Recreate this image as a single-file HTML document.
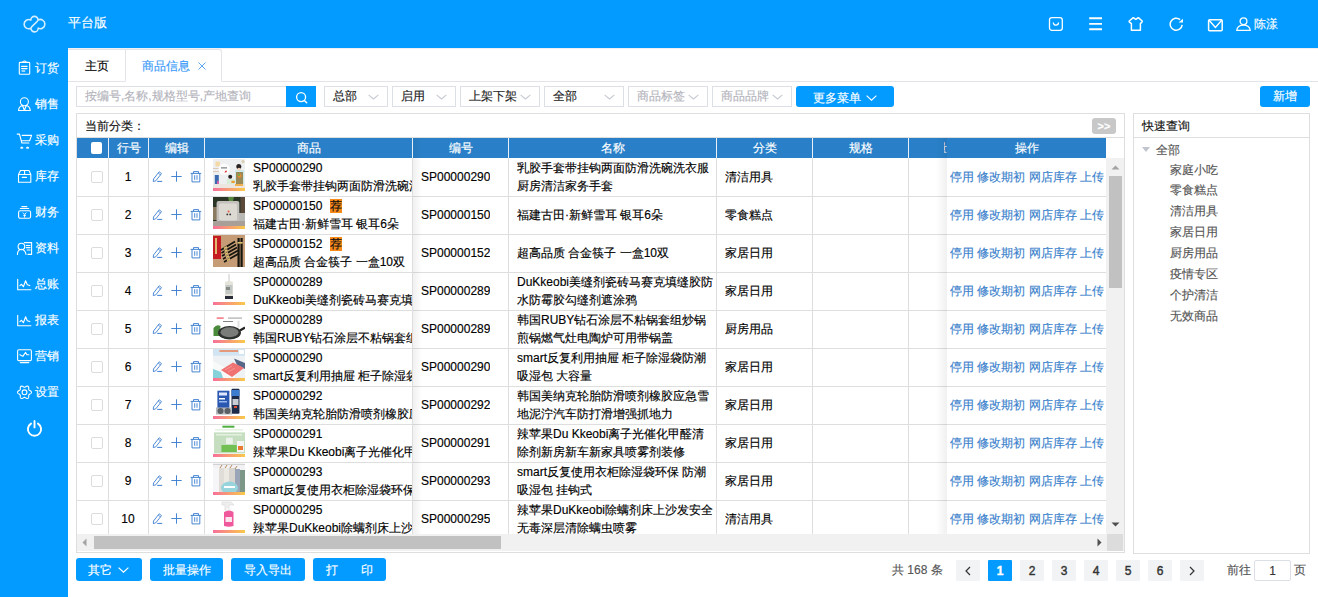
<!DOCTYPE html><html><head><meta charset="utf-8"><style>
*{margin:0;padding:0;box-sizing:border-box}
html,body{width:1318px;height:597px;overflow:hidden;background:#fff;font-family:"Liberation Sans",sans-serif;font-size:12px;color:#000;-webkit-text-stroke:0.15px currentColor}
.abs{position:absolute}
#top{position:absolute;left:0;top:0;width:1318px;height:48px;background:#039bff}
#side{position:absolute;left:0;top:0;width:68px;height:597px;background:#039bff}
.si{position:absolute;left:18px;width:50px;height:16px;color:#fff;font-size:12px;line-height:16px}
.si svg{position:absolute;left:0;top:1px}
.si span{position:absolute;left:17px;top:0;white-space:nowrap}
.tab{position:absolute;top:49px;height:33px;border:1px solid #e2e4ea;line-height:32px;font-size:12px}
.sel{position:absolute;top:86px;height:21px;border:1px solid #dcdfe6;line-height:19px;padding-left:8px;font-size:12px;color:#222;background:#fff}
.sel.ph{color:#b4b4bc}
.chev{position:absolute;right:8px;top:7px}
.btn{position:absolute;background:#039bff;color:#fff;border-radius:3px;text-align:center;font-size:12px}
.hd{position:absolute;top:138px;height:20px;background:#2980c8;color:#fff;line-height:20px;text-align:center}
.vl{position:absolute;width:1px;background:#dedede}
.hl{position:absolute;height:1px;background:#dedede}
.cell{position:absolute;white-space:nowrap;overflow:hidden}
.thumb{position:absolute;width:32px;height:32px}
.link{color:#3a7fcc}
.pg{position:absolute;top:560px;width:24px;height:21px;background:#f2f3f5;color:#333;text-align:center;line-height:23px;font-size:12px;-webkit-text-stroke:0.4px currentColor;border-radius:1px}
.tree{position:absolute;left:1170px;color:#555;font-size:12px;line-height:16px}
</style></head><body>
<svg width="0" height="0" style="position:absolute"><defs><filter id="bl" x="-5%" y="-5%" width="110%" height="110%"><feGaussianBlur stdDeviation="0.6"/></filter></defs></svg>
<div id="top"></div><div id="side"></div>
<svg class="abs" style="left:18px;top:10px" width="34" height="28" viewBox="0 0 34 28"><path d="M12.9 18.2A4.6 4.6 0 1 1 12.83 10.08A3.6 3.6 0 1 1 20.1 9.9C19.4 12.8 13.6 15.4 12.9 18.2M20.1 10A4.6 4.6 0 1 1 20.17 18.12A3.6 3.6 0 1 1 12.9 18.3" stroke="#d6eeff" stroke-width="1.6" fill="none" stroke-linecap="round" stroke-linejoin="round"/></svg>
<div class="abs" style="left:68px;top:14px;color:#fff;font-size:13px;line-height:18px">平台版</div>
<svg class="abs" style="left:14px;top:56px" width="20" height="22"><rect x="5.3" y="6.4" width="10.4" height="11.9" rx="0.8" stroke="#fff" fill="none" stroke-width="1.1" stroke-linecap="round" stroke-linejoin="round"/><path d="M8.2 6.3q2.1-2.6 4.3 0" stroke="#fff" fill="none" stroke-width="1.1" stroke-linecap="round" stroke-linejoin="round"/><path d="M7.6 10.4h5.5M7.6 12.6h5.5" stroke="#fff" fill="none" stroke-width="1.1" stroke-linecap="round" stroke-linejoin="round"/><path d="M7.6 15h3.6" stroke="#fff" stroke-width="1.6" opacity="0.75"/></svg>
<div class="si" style="top:59.5px"><span>订货</span></div>
<svg class="abs" style="left:14px;top:92px" width="20" height="22"><circle cx="10.4" cy="9.7" r="4" stroke="#fff" fill="none" stroke-width="1.1" stroke-linecap="round" stroke-linejoin="round"/><path d="M4.5 18.5q0.3-3.8 4-5.2L10.4 18.5L12.3 13.3q3.7 1.4 4 5.2z" stroke="#fff" fill="none" stroke-width="1.1" stroke-linecap="round" stroke-linejoin="round"/></svg>
<div class="si" style="top:95.5px"><span>销售</span></div>
<svg class="abs" style="left:14px;top:128px" width="20" height="22"><path d="M3.2 6.1h2.3l2.4 8.9h7" stroke="#fff" fill="none" stroke-width="1.1" stroke-linecap="round" stroke-linejoin="round"/><path d="M8.2 7.4h9.4l-2 5.3H7.6" stroke="#fff" fill="none" stroke-width="1.1" stroke-linecap="round" stroke-linejoin="round"/><path d="M6.6 20.2a1.2 1.2 0 0 1 2.4 0zM12.4 20.2a1.2 1.2 0 0 1 2.4 0z" fill="#fff" stroke="#fff" stroke-width="0.8"/></svg>
<div class="si" style="top:131.5px"><span>采购</span></div>
<svg class="abs" style="left:14px;top:164px" width="20" height="22"><path d="M4.5 10.5L6.5 6.5H15L16.8 10.5V18.3H4.5Z M4.5 10.5H16.8 M10.6 6.5V10.5 M8.3 13.4H12.5" stroke="#fff" fill="none" stroke-width="1.1" stroke-linecap="round" stroke-linejoin="round"/></svg>
<div class="si" style="top:167.5px"><span>库存</span></div>
<svg class="abs" style="left:14px;top:200px" width="20" height="22"><path d="M7.8 6.6H12.9M6.3 8.5H14.7" stroke="#fff" fill="none" stroke-width="1.1" stroke-linecap="round" stroke-linejoin="round"/><rect x="4.6" y="10.8" width="12" height="7.5" rx="1.6" stroke="#fff" fill="none" stroke-width="1.1" stroke-linecap="round" stroke-linejoin="round"/><path d="M8.8 12.6L10.6 14.4L12.4 12.6M10.6 14.4V17.6M9.2 15.3H12" stroke="#fff" fill="none" stroke-width="0.9"/></svg>
<div class="si" style="top:203.5px"><span>财务</span></div>
<svg class="abs" style="left:14px;top:236px" width="20" height="22"><circle cx="7.4" cy="10.5" r="3.3" stroke="#fff" fill="none" stroke-width="1.1" stroke-linecap="round" stroke-linejoin="round"/><path d="M3.4 18.4q0.2-4.6 4-5.1q3.8 0.5 4.6 5.1" stroke="#fff" fill="none" stroke-width="1.1" stroke-linecap="round" stroke-linejoin="round"/><path d="M10.4 6.6H17.6V18.4H14M12.2 9.5H16M12.2 11.6H16M13.2 14H16" stroke="#fff" fill="none" stroke-width="1.1" stroke-linecap="round" stroke-linejoin="round"/></svg>
<div class="si" style="top:239.5px"><span>资料</span></div>
<svg class="abs" style="left:14px;top:272px" width="20" height="22"><path d="M3.7 7.2V17.7H16.9" stroke="#fff" fill="none" stroke-width="1.1" stroke-linecap="round" stroke-linejoin="round"/><path d="M5.9 13.6L7.5 12.3L9.4 14.7L11.6 8.8L13.3 12.8L15.8 13.6" stroke="#fff" fill="none" stroke-width="1.1" stroke-linecap="round" stroke-linejoin="round"/></svg>
<div class="si" style="top:275.5px"><span>总账</span></div>
<svg class="abs" style="left:14px;top:308px" width="20" height="22"><path d="M3.7 7.2V17.7H16.9" stroke="#fff" fill="none" stroke-width="1.1" stroke-linecap="round" stroke-linejoin="round"/><path d="M5.9 13.6L7.5 12.3L9.4 14.7L11.6 8.8L13.3 12.8L15.8 13.6" stroke="#fff" fill="none" stroke-width="1.1" stroke-linecap="round" stroke-linejoin="round"/></svg>
<div class="si" style="top:311.5px"><span>报表</span></div>
<svg class="abs" style="left:14px;top:344px" width="20" height="22"><rect x="3.6" y="5.8" width="13.8" height="10.8" rx="1.2" stroke="#fff" fill="none" stroke-width="1.1" stroke-linecap="round" stroke-linejoin="round"/><path d="M6.3 18.6H14.7" stroke="#fff" stroke-width="1.3" stroke-linecap="round"/><path d="M5.9 10.7L8.8 12.4L11.6 8.4L12.9 10.7H14.9" stroke="#fff" fill="none" stroke-width="1.1" stroke-linecap="round" stroke-linejoin="round"/></svg>
<div class="si" style="top:347.5px"><span>营销</span></div>
<svg class="abs" style="left:14px;top:380px" width="20" height="22"><path d="M17.45 12.30 L17.39 12.66 L17.23 13.01 L16.98 13.33 L16.66 13.61 L16.30 13.85 L15.93 14.06 L15.58 14.25 L15.28 14.43 L15.04 14.61 L14.87 14.82 L14.77 15.08 L14.73 15.37 L14.73 15.72 L14.74 16.12 L14.74 16.54 L14.71 16.98 L14.63 17.40 L14.48 17.78 L14.26 18.09 L13.98 18.32 L13.63 18.45 L13.25 18.48 L12.85 18.42 L12.44 18.29 L12.05 18.10 L11.69 17.88 L11.35 17.67 L11.05 17.50 L10.77 17.39 L10.50 17.35 L10.23 17.39 L9.95 17.50 L9.65 17.67 L9.31 17.88 L8.95 18.10 L8.56 18.29 L8.15 18.42 L7.75 18.48 L7.37 18.45 L7.03 18.32 L6.74 18.09 L6.52 17.78 L6.37 17.40 L6.29 16.98 L6.26 16.54 L6.26 16.12 L6.27 15.72 L6.27 15.37 L6.23 15.08 L6.13 14.82 L5.96 14.61 L5.72 14.43 L5.42 14.25 L5.07 14.06 L4.70 13.85 L4.34 13.61 L4.02 13.33 L3.77 13.01 L3.61 12.66 L3.55 12.30 L3.61 11.94 L3.77 11.59 L4.02 11.27 L4.34 10.99 L4.70 10.75 L5.07 10.54 L5.42 10.35 L5.72 10.17 L5.96 9.99 L6.13 9.78 L6.23 9.52 L6.27 9.23 L6.27 8.88 L6.26 8.48 L6.26 8.06 L6.29 7.62 L6.37 7.20 L6.52 6.82 L6.74 6.51 L7.02 6.28 L7.37 6.15 L7.75 6.12 L8.15 6.18 L8.56 6.31 L8.95 6.50 L9.31 6.72 L9.65 6.93 L9.95 7.10 L10.23 7.21 L10.50 7.25 L10.77 7.21 L11.05 7.10 L11.35 6.93 L11.69 6.72 L12.05 6.50 L12.44 6.31 L12.85 6.18 L13.25 6.12 L13.63 6.15 L13.98 6.28 L14.26 6.51 L14.48 6.82 L14.63 7.20 L14.71 7.62 L14.74 8.06 L14.74 8.48 L14.73 8.88 L14.73 9.23 L14.77 9.52 L14.87 9.78 L15.04 9.99 L15.28 10.17 L15.58 10.35 L15.93 10.54 L16.30 10.75 L16.66 10.99 L16.98 11.27 L17.23 11.59 L17.39 11.94 L17.45 12.30Z" stroke="#fff" fill="none" stroke-width="1.1" stroke-linecap="round" stroke-linejoin="round"/><circle cx="10.5" cy="12.3" r="2.4" stroke="#fff" fill="none" stroke-width="1.1" stroke-linecap="round" stroke-linejoin="round"/></svg>
<div class="si" style="top:383.5px"><span>设置</span></div>
<svg class="abs" style="left:26px;top:420px" width="17" height="17" viewBox="0 0 17 17"><path d="M5 3.6A6.6 6.6 0 1 0 12 3.6" stroke="#fff" stroke-width="1.9" fill="none" stroke-linecap="round"/><path d="M8.5 1v6.4" stroke="#fff" stroke-width="1.9" stroke-linecap="round"/></svg>
<svg class="abs" style="left:1048px;top:17px" width="16" height="14" viewBox="0 0 16 14"><rect x="1.5" y="0.7" width="12.8" height="12.6" rx="2.4" stroke="#fff" fill="none" stroke-width="1.3" stroke-width="1.4"/><path d="M5.3 5.6a2.6 2.6 0 0 0 5.2 0" stroke="#fff" fill="none" stroke-width="1.3" stroke-width="1.2"/></svg>
<svg class="abs" style="left:1089px;top:17px" width="14" height="14" viewBox="0 0 14 14"><path d="M0.2 1.2h12.8M0.2 6.9h12.8M0.2 12.2h12.8" stroke="#fff" stroke-width="1.9"/></svg>
<svg class="abs" style="left:1127px;top:17px" width="17" height="15" viewBox="0 0 17 15"><path d="M6.3 0.6L8.8 2.3L11.3 0.6L15.2 4L15.2 4.8L13.4 6.6V13.3H4.4V6.6L2.2 4.8L2.2 4Z" stroke="#fff" fill="none" stroke-width="1.5" stroke-linejoin="round"/></svg>
<svg class="abs" style="left:1168px;top:17px" width="16" height="15" viewBox="0 0 16 15"><path d="M14.17 7.83A6 6 0 1 1 12.06 2.6" stroke="#fff" fill="none" stroke-width="1.5"/><path d="M10.6 5.5H15V1.7z" fill="#fff"/></svg>
<svg class="abs" style="left:1207px;top:18px" width="17" height="15" viewBox="0 0 17 15"><rect x="1.6" y="1.7" width="13.6" height="11" rx="1" stroke="#fff" fill="none" stroke-width="1.5"/><path d="M2.1 2.2L8.4 9.4L14.7 2.2" stroke="#fff" fill="none" stroke-width="1.4"/></svg>
<svg class="abs" style="left:1236px;top:17px" width="15" height="14" viewBox="0 0 15 14"><circle cx="7.5" cy="4.2" r="3.4" stroke="#fff" fill="none" stroke-width="1.3"/><path d="M0.8 13.4c0-3.4 3-5.4 6.7-5.4s6.7 2 6.7 5.4z" stroke="#fff" fill="none" stroke-width="1.3"/></svg>
<div class="abs" style="left:1254px;top:15px;color:#fff;font-size:12px;line-height:18px">陈漾</div>
<div class="hl" style="left:68px;top:48px;width:1250px;background:#eef0f4"></div>
<div class="hl" style="left:68px;top:81px;width:1250px;background:#e2e4ea"></div>
<div class="tab" style="left:68px;width:58px;color:#000;padding-left:17px;border-left:none">主页</div>
<div class="tab" style="left:125px;width:97px;color:#3c9cf8;padding-left:16px;border-bottom:1px solid #fff;border-top-right-radius:3px;background:#fff">商品信息<svg class="abs" style="left:72px;top:12px" width="8" height="8" viewBox="0 0 8 8"><path d="M0.5 0.5l7 7M7.5 0.5l-7 7" stroke="#5aa8f8" stroke-width="1"/></svg></div>
<div class="sel ph" style="left:76px;width:211px;padding-left:8px">按编号,名称,规格型号,产地查询</div>
<div class="abs" style="left:286px;top:86px;width:30px;height:21px;background:#039bff"></div>
<svg class="abs" style="left:294px;top:90px" width="15" height="15" viewBox="0 0 15 15"><circle cx="7.1" cy="7.1" r="4.5" stroke="#fff" stroke-width="1.3" fill="none"/><path d="M10.3 10.4l2.4 2.4" stroke="#fff" stroke-width="1.4" stroke-linecap="round"/></svg>
<div class="sel" style="left:324px;width:64px">总部<svg class="chev" width="11" height="6" viewBox="0 0 11 6"><path d="M0.6 0.8L5.5 5L10.4 0.8" stroke="#c4c8d2" fill="none" stroke-width="1.05"/></svg></div>
<div class="sel" style="left:392px;width:64px">启用<svg class="chev" width="11" height="6" viewBox="0 0 11 6"><path d="M0.6 0.8L5.5 5L10.4 0.8" stroke="#c4c8d2" fill="none" stroke-width="1.05"/></svg></div>
<div class="sel" style="left:460px;width:80px">上架下架<svg class="chev" width="11" height="6" viewBox="0 0 11 6"><path d="M0.6 0.8L5.5 5L10.4 0.8" stroke="#c4c8d2" fill="none" stroke-width="1.05"/></svg></div>
<div class="sel" style="left:544px;width:80px">全部<svg class="chev" width="11" height="6" viewBox="0 0 11 6"><path d="M0.6 0.8L5.5 5L10.4 0.8" stroke="#c4c8d2" fill="none" stroke-width="1.05"/></svg></div>
<div class="sel ph" style="left:628px;width:80px">商品标签<svg class="chev" width="11" height="6" viewBox="0 0 11 6"><path d="M0.6 0.8L5.5 5L10.4 0.8" stroke="#c4c8d2" fill="none" stroke-width="1.05"/></svg></div>
<div class="sel ph" style="left:712px;width:80px">商品品牌<svg class="chev" width="11" height="6" viewBox="0 0 11 6"><path d="M0.6 0.8L5.5 5L10.4 0.8" stroke="#c4c8d2" fill="none" stroke-width="1.05"/></svg></div>
<div class="btn" style="left:796px;top:86px;width:98px;height:21px;font-size:12px"><span class="abs" style="left:17px;top:2px;line-height:21px">更多菜单</span><svg class="abs" style="left:70px;top:9px" width="11" height="6" viewBox="0 0 11 6"><path d="M0.6 0.6l4.9 4.6 4.9-4.6" stroke="#fff" fill="none" stroke-width="1.1"/></svg></div>
<div class="btn" style="left:1260px;top:86px;width:50px;height:21px;line-height:21px">新增</div>
<div class="abs" style="left:76px;top:113px;width:1049px;height:440px;border:1px solid #dedede"></div>
<div class="abs" style="left:85px;top:117px;font-size:12px;line-height:18px;color:#111">当前分类：</div>
<div class="abs" style="left:1092px;top:118px;width:24px;height:16px;background:#c8c8c8;border-radius:3px;color:#fff;font-size:11px;line-height:16px;text-align:center;font-weight:bold">&gt;&gt;</div>
<div class="hl" style="left:77px;top:137px;width:1047px"></div>
<div class="hd" style="left:77px;width:1029px"></div>
<div class="hd" style="left:78px;width:31px;background:transparent"></div>
<div class="vl" style="left:108px;top:138px;height:20px;background:#e8f0f8"></div>
<div class="hd" style="left:109px;width:40px;background:transparent">行号</div>
<div class="vl" style="left:148px;top:138px;height:20px;background:#e8f0f8"></div>
<div class="hd" style="left:149px;width:56px;background:transparent">编辑</div>
<div class="vl" style="left:204px;top:138px;height:20px;background:#e8f0f8"></div>
<div class="hd" style="left:205px;width:208px;background:transparent">商品</div>
<div class="vl" style="left:412px;top:138px;height:20px;background:#e8f0f8"></div>
<div class="hd" style="left:413px;width:96px;background:transparent">编号</div>
<div class="vl" style="left:508px;top:138px;height:20px;background:#e8f0f8"></div>
<div class="hd" style="left:509px;width:208px;background:transparent">名称</div>
<div class="vl" style="left:716px;top:138px;height:20px;background:#e8f0f8"></div>
<div class="hd" style="left:717px;width:96px;background:transparent">分类</div>
<div class="vl" style="left:812px;top:138px;height:20px;background:#e8f0f8"></div>
<div class="hd" style="left:813px;width:96px;background:transparent">规格</div>
<div class="vl" style="left:908px;top:138px;height:20px;background:#e8f0f8"></div>
<div class="hd" style="left:909px;width:96px;background:transparent"></div>
<div class="vl" style="left:1004px;top:138px;height:20px;background:#e8f0f8"></div>
<div class="abs" style="left:91px;top:142px;width:11px;height:12px;background:#fff;border-radius:2px"></div>
<div class="abs" style="left:77px;top:158px;width:1029px;height:376px;overflow:hidden">
<div class="hl" style="left:0;top:38px;width:1029px"></div>
<div class="hl" style="left:0;top:76px;width:1029px"></div>
<div class="hl" style="left:0;top:114px;width:1029px"></div>
<div class="hl" style="left:0;top:152px;width:1029px"></div>
<div class="hl" style="left:0;top:190px;width:1029px"></div>
<div class="hl" style="left:0;top:228px;width:1029px"></div>
<div class="hl" style="left:0;top:266px;width:1029px"></div>
<div class="hl" style="left:0;top:304px;width:1029px"></div>
<div class="hl" style="left:0;top:342px;width:1029px"></div>
<div class="hl" style="left:0;top:380px;width:1029px"></div>
<div class="vl" style="left:31px;top:0;height:380px"></div>
<div class="vl" style="left:71px;top:0;height:380px"></div>
<div class="vl" style="left:127px;top:0;height:380px"></div>
<div class="vl" style="left:335px;top:0;height:380px"></div>
<div class="vl" style="left:431px;top:0;height:380px"></div>
<div class="vl" style="left:639px;top:0;height:380px"></div>
<div class="vl" style="left:735px;top:0;height:380px"></div>
<div class="vl" style="left:831px;top:0;height:380px"></div>
<div class="vl" style="left:927px;top:0;height:380px"></div>
<div class="abs" style="left:14px;top:13px;width:12px;height:12px;border:1px solid #dcdcdc;border-radius:2px;background:#fff"></div>
<div class="cell" style="left:31px;top:10px;width:40px;text-align:center;line-height:18px;font-size:12px">1</div>
<div class="abs" style="left:75px;top:12.6px"><svg width="11" height="12" viewBox="0 0 11 12"><path d="M1.3 10.6l0.2-2.6 5.7-7.2 2.3 1.8-5.7 7.2z" stroke="#3d7fd0" fill="none" stroke-width="0.9" stroke-linejoin="round"/><path d="M6.2 2.1l2.3 1.8" stroke="#3d7fd0" stroke-width="0.8"/><path d="M5.2 10.4h5" stroke="#3d7fd0" stroke-width="1"/></svg></div>
<div class="abs" style="left:94px;top:13px"><svg width="11" height="11" viewBox="0 0 11 11"><path d="M5.5 0.3v10.4M0.3 5.5h10.4" stroke="#3d7fd0" stroke-width="0.95"/></svg></div>
<div class="abs" style="left:113px;top:12.6px"><svg width="12" height="12" viewBox="0 0 12 12"><path d="M0.6 2.4h10.6M3.5 2.4V0.6h5v1.8M2 2.4v8.5h7.8V2.4" stroke="#3d7fd0" fill="none" stroke-width="0.95"/><path d="M4.7 4.2v4.6M7 4.2v4.6" stroke="#3d7fd0" stroke-width="0.9"/></svg></div>
<div class="abs" style="left:136px;top:1px"><svg class="thumb" width="32" height="32" viewBox="0 0 32 32"><defs><linearGradient id="sg" x1="0" x2="1"><stop offset="0" stop-color="#f7709a"/><stop offset="1" stop-color="#f9c94a"/></linearGradient></defs><g filter="url(#bl)"><rect width="32" height="32" fill="#eeeff0"/><rect x="2.4" y="2.4" width="4.6" height="5" rx="1" fill="#f5d9a8"/><rect x="0" y="9" width="6" height="1" fill="#dcc8b8"/><rect x="0" y="12" width="6" height="1" fill="#dcc8b8"/><circle cx="11.2" cy="10.1" r="5.7" fill="#fbfbfb"/><rect x="8" y="8.4" width="6" height="1" fill="#666"/><path d="M11.5 13.5q1-3 2.5-1.5q-0.5 2-2.5 1.5" fill="#e02a2a"/><circle cx="30" cy="2.6" r="1.6" fill="#d8d0b0"/><path d="M22 11.5q4-2 9 0v15h-9z" fill="#cfe8e8"/><path d="M23 13h7v13h-7z" fill="#9a8a58"/><circle cx="25.8" cy="7.6" r="2.5" fill="#2c2422"/><circle cx="26" cy="10.2" r="1.5" fill="#f2d4bc"/><circle cx="26.5" cy="16.8" r="2" fill="#e88a30"/><circle cx="26" cy="16" r="1" fill="#60b040"/><circle cx="17.2" cy="17.8" r="2" fill="#262020"/><path d="M13.8 20h8v7.5h-8z" fill="#d8ecd8"/><rect x="18.4" y="21.8" width="3.4" height="2.2" fill="#f09a30"/><rect x="1.8" y="16" width="4" height="12.6" fill="#3a6ab0"/><rect x="4.1" y="21.8" width="1.7" height="6.8" fill="#e860a8"/><rect x="0" y="25" width="32" height="4" fill="#ebe6e0"/><rect x="22" y="25" width="8" height="2" fill="#f0b050"/></g><rect x="0" y="29" width="32" height="3" fill="url(#sg)"/></svg></div>
<div class="cell" style="left:176px;top:1px;width:159px;line-height:18px">SP00000290<br>乳胶手套带挂钩两面防滑洗碗洗衣服厨房清洁家务手套</div>
<div class="cell" style="left:344px;top:10px;line-height:18px">SP00000290</div>
<div class="cell" style="left:440px;top:1px;line-height:18px">乳胶手套带挂钩两面防滑洗碗洗衣服<br>厨房清洁家务手套</div>
<div class="cell" style="left:648px;top:10px;line-height:18px">清洁用具</div>
<div class="abs" style="left:14px;top:51px;width:12px;height:12px;border:1px solid #dcdcdc;border-radius:2px;background:#fff"></div>
<div class="cell" style="left:31px;top:48px;width:40px;text-align:center;line-height:18px;font-size:12px">2</div>
<div class="abs" style="left:75px;top:50.6px"><svg width="11" height="12" viewBox="0 0 11 12"><path d="M1.3 10.6l0.2-2.6 5.7-7.2 2.3 1.8-5.7 7.2z" stroke="#3d7fd0" fill="none" stroke-width="0.9" stroke-linejoin="round"/><path d="M6.2 2.1l2.3 1.8" stroke="#3d7fd0" stroke-width="0.8"/><path d="M5.2 10.4h5" stroke="#3d7fd0" stroke-width="1"/></svg></div>
<div class="abs" style="left:94px;top:51px"><svg width="11" height="11" viewBox="0 0 11 11"><path d="M5.5 0.3v10.4M0.3 5.5h10.4" stroke="#3d7fd0" stroke-width="0.95"/></svg></div>
<div class="abs" style="left:113px;top:50.6px"><svg width="12" height="12" viewBox="0 0 12 12"><path d="M0.6 2.4h10.6M3.5 2.4V0.6h5v1.8M2 2.4v8.5h7.8V2.4" stroke="#3d7fd0" fill="none" stroke-width="0.95"/><path d="M4.7 4.2v4.6M7 4.2v4.6" stroke="#3d7fd0" stroke-width="0.9"/></svg></div>
<div class="abs" style="left:136px;top:39px"><svg class="thumb" width="32" height="32" viewBox="0 0 32 32"><g filter="url(#bl)"><rect width="32" height="32" fill="#2c3428"/><path d="M15 0h6l-1 4h-4z" fill="#5a8a40"/><rect x="0" y="10" width="4.7" height="13" fill="#8a7a60"/><rect x="27.5" y="0" width="4.5" height="16" fill="#5a4a38"/><rect x="26" y="16" width="6" height="10" fill="#b8b8b4"/><rect x="3.6" y="4.1" width="22.7" height="22.2" rx="2" fill="#c4c0bc"/><rect x="6" y="6.5" width="18" height="17" rx="2" fill="#dcd8d2"/><circle cx="14.3" cy="17.4" r="0.9" fill="#333"/><circle cx="17.2" cy="17.4" r="0.9" fill="#333"/><circle cx="15.6" cy="14.6" r="1" fill="#e06040"/><rect x="0" y="24" width="32" height="5" fill="#a8a098"/></g><rect x="0" y="29" width="32" height="3" fill="url(#sg)"/></svg></div>
<div class="cell" style="left:176px;top:39px;width:159px;line-height:18px">SP00000150<span style="display:inline-block;margin-left:8px;background:#f98a1a;color:#111;width:12px;height:14px;line-height:14px;overflow:hidden;vertical-align:top;margin-top:2px;text-align:center">荐</span><br>福建古田·新鲜雪耳 银耳6朵</div>
<div class="cell" style="left:344px;top:48px;line-height:18px">SP00000150</div>
<div class="cell" style="left:440px;top:48px;line-height:18px">福建古田·新鲜雪耳 银耳6朵</div>
<div class="cell" style="left:648px;top:48px;line-height:18px">零食糕点</div>
<div class="abs" style="left:14px;top:89px;width:12px;height:12px;border:1px solid #dcdcdc;border-radius:2px;background:#fff"></div>
<div class="cell" style="left:31px;top:86px;width:40px;text-align:center;line-height:18px;font-size:12px">3</div>
<div class="abs" style="left:75px;top:88.6px"><svg width="11" height="12" viewBox="0 0 11 12"><path d="M1.3 10.6l0.2-2.6 5.7-7.2 2.3 1.8-5.7 7.2z" stroke="#3d7fd0" fill="none" stroke-width="0.9" stroke-linejoin="round"/><path d="M6.2 2.1l2.3 1.8" stroke="#3d7fd0" stroke-width="0.8"/><path d="M5.2 10.4h5" stroke="#3d7fd0" stroke-width="1"/></svg></div>
<div class="abs" style="left:94px;top:89px"><svg width="11" height="11" viewBox="0 0 11 11"><path d="M5.5 0.3v10.4M0.3 5.5h10.4" stroke="#3d7fd0" stroke-width="0.95"/></svg></div>
<div class="abs" style="left:113px;top:88.6px"><svg width="12" height="12" viewBox="0 0 12 12"><path d="M0.6 2.4h10.6M3.5 2.4V0.6h5v1.8M2 2.4v8.5h7.8V2.4" stroke="#3d7fd0" fill="none" stroke-width="0.95"/><path d="M4.7 4.2v4.6M7 4.2v4.6" stroke="#3d7fd0" stroke-width="0.9"/></svg></div>
<div class="abs" style="left:136px;top:77px"><svg class="thumb" width="32" height="32" viewBox="0 0 32 32"><g filter="url(#bl)"><rect width="32" height="32" fill="#c59c74"/><rect x="0" y="1" width="8" height="23" fill="#c41c20"/><rect x="2" y="3" width="2" height="16" fill="#e0b870"/><path d="M8 15L22 6.5M8.5 18L23 9.5M9 21L24 12.5M10 24L25 15.5M11 27L26 18.5" stroke="#141210" stroke-width="1.7"/><path d="M11 13.5l3-1.8M11.5 16.5l3-1.8M12 19.5l3-1.8M13 22.5l3-1.8M14 25.5l3-1.8" stroke="#dcc070" stroke-width="1.6"/><rect x="24.5" y="3" width="2.2" height="29" fill="#141210"/><rect x="27.5" y="3" width="2.2" height="29" fill="#141210"/><rect x="24.5" y="7" width="5.2" height="1.6" fill="#dcc070"/></g></svg></div>
<div class="cell" style="left:176px;top:77px;width:159px;line-height:18px">SP00000152<span style="display:inline-block;margin-left:8px;background:#f98a1a;color:#111;width:12px;height:14px;line-height:14px;overflow:hidden;vertical-align:top;margin-top:2px;text-align:center">荐</span><br>超高品质 合金筷子 一盒10双</div>
<div class="cell" style="left:344px;top:86px;line-height:18px">SP00000152</div>
<div class="cell" style="left:440px;top:86px;line-height:18px">超高品质 合金筷子 一盒10双</div>
<div class="cell" style="left:648px;top:86px;line-height:18px">家居日用</div>
<div class="abs" style="left:14px;top:127px;width:12px;height:12px;border:1px solid #dcdcdc;border-radius:2px;background:#fff"></div>
<div class="cell" style="left:31px;top:124px;width:40px;text-align:center;line-height:18px;font-size:12px">4</div>
<div class="abs" style="left:75px;top:126.6px"><svg width="11" height="12" viewBox="0 0 11 12"><path d="M1.3 10.6l0.2-2.6 5.7-7.2 2.3 1.8-5.7 7.2z" stroke="#3d7fd0" fill="none" stroke-width="0.9" stroke-linejoin="round"/><path d="M6.2 2.1l2.3 1.8" stroke="#3d7fd0" stroke-width="0.8"/><path d="M5.2 10.4h5" stroke="#3d7fd0" stroke-width="1"/></svg></div>
<div class="abs" style="left:94px;top:127px"><svg width="11" height="11" viewBox="0 0 11 11"><path d="M5.5 0.3v10.4M0.3 5.5h10.4" stroke="#3d7fd0" stroke-width="0.95"/></svg></div>
<div class="abs" style="left:113px;top:126.6px"><svg width="12" height="12" viewBox="0 0 12 12"><path d="M0.6 2.4h10.6M3.5 2.4V0.6h5v1.8M2 2.4v8.5h7.8V2.4" stroke="#3d7fd0" fill="none" stroke-width="0.95"/><path d="M4.7 4.2v4.6M7 4.2v4.6" stroke="#3d7fd0" stroke-width="0.9"/></svg></div>
<div class="abs" style="left:136px;top:115px"><svg class="thumb" width="32" height="32" viewBox="0 0 32 32"><g filter="url(#bl)"><rect width="32" height="32" fill="#fff"/><rect x="15" y="1" width="2" height="7" fill="#e4e4e4"/><path d="M12 9q4-2 8 0v16h-8z" fill="#e4e4dc"/><rect x="12.5" y="12" width="7" height="9" fill="#c4c8c4"/><rect x="13" y="14" width="4" height="3" fill="#888c88"/><rect x="12" y="23" width="8" height="3" fill="#2a2e3a"/></g><rect x="0" y="29" width="32" height="3" fill="url(#sg)"/></svg></div>
<div class="cell" style="left:176px;top:115px;width:159px;line-height:18px">SP00000289<br>DuKkeobi美缝剂瓷砖马赛克填缝胶防水防霉胶勾缝剂遮涂鸦</div>
<div class="cell" style="left:344px;top:124px;line-height:18px">SP00000289</div>
<div class="cell" style="left:440px;top:115px;line-height:18px">DuKkeobi美缝剂瓷砖马赛克填缝胶防<br>水防霉胶勾缝剂遮涂鸦</div>
<div class="cell" style="left:648px;top:124px;line-height:18px">家居日用</div>
<div class="abs" style="left:14px;top:165px;width:12px;height:12px;border:1px solid #dcdcdc;border-radius:2px;background:#fff"></div>
<div class="cell" style="left:31px;top:162px;width:40px;text-align:center;line-height:18px;font-size:12px">5</div>
<div class="abs" style="left:75px;top:164.6px"><svg width="11" height="12" viewBox="0 0 11 12"><path d="M1.3 10.6l0.2-2.6 5.7-7.2 2.3 1.8-5.7 7.2z" stroke="#3d7fd0" fill="none" stroke-width="0.9" stroke-linejoin="round"/><path d="M6.2 2.1l2.3 1.8" stroke="#3d7fd0" stroke-width="0.8"/><path d="M5.2 10.4h5" stroke="#3d7fd0" stroke-width="1"/></svg></div>
<div class="abs" style="left:94px;top:165px"><svg width="11" height="11" viewBox="0 0 11 11"><path d="M5.5 0.3v10.4M0.3 5.5h10.4" stroke="#3d7fd0" stroke-width="0.95"/></svg></div>
<div class="abs" style="left:113px;top:164.6px"><svg width="12" height="12" viewBox="0 0 12 12"><path d="M0.6 2.4h10.6M3.5 2.4V0.6h5v1.8M2 2.4v8.5h7.8V2.4" stroke="#3d7fd0" fill="none" stroke-width="0.95"/><path d="M4.7 4.2v4.6M7 4.2v4.6" stroke="#3d7fd0" stroke-width="0.9"/></svg></div>
<div class="abs" style="left:136px;top:153px"><svg class="thumb" width="32" height="32" viewBox="0 0 32 32"><g filter="url(#bl)"><rect width="32" height="32" fill="#fff"/><rect x="3.7" y="6.4" width="7" height="1.4" fill="#f06a7a"/><rect x="15" y="6.4" width="14" height="1.4" fill="#b8b8b8"/><rect x="10" y="10" width="10" height="0.8" fill="#666"/><rect x="24.5" y="9.7" width="2" height="6.8" fill="#e0e0e0"/><path d="M0.5 17q3-4 7-2l-1 10h-6z" fill="#4a8a3a"/><ellipse cx="16.5" cy="21.7" rx="11.5" ry="6.7" fill="#2e302e"/><ellipse cx="16.5" cy="21.2" rx="9" ry="5" fill="#7a7c7a"/><path d="M27 19.5L32 16.5" stroke="#222" stroke-width="2.2"/></g><rect x="0" y="29" width="32" height="3" fill="url(#sg)"/></svg></div>
<div class="cell" style="left:176px;top:153px;width:159px;line-height:18px">SP00000289<br>韩国RUBY钻石涂层不粘锅套组炒锅煎锅燃气灶电陶炉可用带锅盖</div>
<div class="cell" style="left:344px;top:162px;line-height:18px">SP00000289</div>
<div class="cell" style="left:440px;top:153px;line-height:18px">韩国RUBY钻石涂层不粘锅套组炒锅<br>煎锅燃气灶电陶炉可用带锅盖</div>
<div class="cell" style="left:648px;top:162px;line-height:18px">厨房用品</div>
<div class="abs" style="left:14px;top:203px;width:12px;height:12px;border:1px solid #dcdcdc;border-radius:2px;background:#fff"></div>
<div class="cell" style="left:31px;top:200px;width:40px;text-align:center;line-height:18px;font-size:12px">6</div>
<div class="abs" style="left:75px;top:202.6px"><svg width="11" height="12" viewBox="0 0 11 12"><path d="M1.3 10.6l0.2-2.6 5.7-7.2 2.3 1.8-5.7 7.2z" stroke="#3d7fd0" fill="none" stroke-width="0.9" stroke-linejoin="round"/><path d="M6.2 2.1l2.3 1.8" stroke="#3d7fd0" stroke-width="0.8"/><path d="M5.2 10.4h5" stroke="#3d7fd0" stroke-width="1"/></svg></div>
<div class="abs" style="left:94px;top:203px"><svg width="11" height="11" viewBox="0 0 11 11"><path d="M5.5 0.3v10.4M0.3 5.5h10.4" stroke="#3d7fd0" stroke-width="0.95"/></svg></div>
<div class="abs" style="left:113px;top:202.6px"><svg width="12" height="12" viewBox="0 0 12 12"><path d="M0.6 2.4h10.6M3.5 2.4V0.6h5v1.8M2 2.4v8.5h7.8V2.4" stroke="#3d7fd0" fill="none" stroke-width="0.95"/><path d="M4.7 4.2v4.6M7 4.2v4.6" stroke="#3d7fd0" stroke-width="0.9"/></svg></div>
<div class="abs" style="left:136px;top:191px"><svg class="thumb" width="32" height="32" viewBox="0 0 32 32"><g filter="url(#bl)"><rect width="32" height="32" fill="#eef2f4"/><rect width="32" height="6.7" fill="#d0e4f2"/><rect x="6.4" y="1.3" width="18.6" height="1.4" fill="#f07848"/><rect x="26" y="1" width="5" height="4" fill="#fff"/><path d="M0 12L22 24V29H0z" fill="#f8fafa"/><path d="M21 9.4L32 14V20L24 16z" fill="#566888"/><path d="M8 21L20 13.4L31 19L19 28z" fill="#f07272"/><path d="M12 21l7-4M15 23l7-4" stroke="#f8a0a0" stroke-width="0.8"/><path d="M0 20L8 23L10 29H0z" fill="#86d2da"/></g><rect x="0" y="29" width="32" height="3" fill="url(#sg)"/></svg></div>
<div class="cell" style="left:176px;top:191px;width:159px;line-height:18px">SP00000290<br>smart反复利用抽屉 柜子除湿袋防潮吸湿包 大容量</div>
<div class="cell" style="left:344px;top:200px;line-height:18px">SP00000290</div>
<div class="cell" style="left:440px;top:191px;line-height:18px">smart反复利用抽屉 柜子除湿袋防潮<br>吸湿包 大容量</div>
<div class="cell" style="left:648px;top:200px;line-height:18px">家居日用</div>
<div class="abs" style="left:14px;top:241px;width:12px;height:12px;border:1px solid #dcdcdc;border-radius:2px;background:#fff"></div>
<div class="cell" style="left:31px;top:238px;width:40px;text-align:center;line-height:18px;font-size:12px">7</div>
<div class="abs" style="left:75px;top:240.6px"><svg width="11" height="12" viewBox="0 0 11 12"><path d="M1.3 10.6l0.2-2.6 5.7-7.2 2.3 1.8-5.7 7.2z" stroke="#3d7fd0" fill="none" stroke-width="0.9" stroke-linejoin="round"/><path d="M6.2 2.1l2.3 1.8" stroke="#3d7fd0" stroke-width="0.8"/><path d="M5.2 10.4h5" stroke="#3d7fd0" stroke-width="1"/></svg></div>
<div class="abs" style="left:94px;top:241px"><svg width="11" height="11" viewBox="0 0 11 11"><path d="M5.5 0.3v10.4M0.3 5.5h10.4" stroke="#3d7fd0" stroke-width="0.95"/></svg></div>
<div class="abs" style="left:113px;top:240.6px"><svg width="12" height="12" viewBox="0 0 12 12"><path d="M0.6 2.4h10.6M3.5 2.4V0.6h5v1.8M2 2.4v8.5h7.8V2.4" stroke="#3d7fd0" fill="none" stroke-width="0.95"/><path d="M4.7 4.2v4.6M7 4.2v4.6" stroke="#3d7fd0" stroke-width="0.9"/></svg></div>
<div class="abs" style="left:136px;top:229px"><svg class="thumb" width="32" height="32" viewBox="0 0 32 32"><g filter="url(#bl)"><rect width="32" height="32" fill="#fff"/><rect x="4.4" y="3.7" width="12" height="17.5" fill="#2a58b0"/><rect x="6" y="5.5" width="8" height="3" fill="#dfe8ff"/><rect x="6" y="11" width="6" height="1.5" fill="#fff"/><rect x="6" y="14" width="8" height="1.5" fill="#9ab8f0"/><rect x="18.5" y="1.7" width="8" height="25" rx="1" fill="#1e2a48"/><rect x="18.5" y="3" width="8" height="6" fill="#3a7cd0"/><rect x="19.5" y="12" width="6" height="6" fill="#c8ccd4"/><rect x="21" y="19" width="3" height="2" fill="#e05030"/><rect x="3" y="20.5" width="16" height="7" fill="#b4b8bc"/><circle cx="7.5" cy="24" r="3" fill="#5a5e64"/><circle cx="14.5" cy="24" r="3" fill="#5a5e64"/></g><rect x="0" y="29" width="32" height="3" fill="url(#sg)"/></svg></div>
<div class="cell" style="left:176px;top:229px;width:159px;line-height:18px">SP00000292<br>韩国美纳克轮胎防滑喷剂橡胶应急雪地泥泞汽车防打滑增强抓地力</div>
<div class="cell" style="left:344px;top:238px;line-height:18px">SP00000292</div>
<div class="cell" style="left:440px;top:229px;line-height:18px">韩国美纳克轮胎防滑喷剂橡胶应急雪<br>地泥泞汽车防打滑增强抓地力</div>
<div class="cell" style="left:648px;top:238px;line-height:18px">家居日用</div>
<div class="abs" style="left:14px;top:279px;width:12px;height:12px;border:1px solid #dcdcdc;border-radius:2px;background:#fff"></div>
<div class="cell" style="left:31px;top:276px;width:40px;text-align:center;line-height:18px;font-size:12px">8</div>
<div class="abs" style="left:75px;top:278.6px"><svg width="11" height="12" viewBox="0 0 11 12"><path d="M1.3 10.6l0.2-2.6 5.7-7.2 2.3 1.8-5.7 7.2z" stroke="#3d7fd0" fill="none" stroke-width="0.9" stroke-linejoin="round"/><path d="M6.2 2.1l2.3 1.8" stroke="#3d7fd0" stroke-width="0.8"/><path d="M5.2 10.4h5" stroke="#3d7fd0" stroke-width="1"/></svg></div>
<div class="abs" style="left:94px;top:279px"><svg width="11" height="11" viewBox="0 0 11 11"><path d="M5.5 0.3v10.4M0.3 5.5h10.4" stroke="#3d7fd0" stroke-width="0.95"/></svg></div>
<div class="abs" style="left:113px;top:278.6px"><svg width="12" height="12" viewBox="0 0 12 12"><path d="M0.6 2.4h10.6M3.5 2.4V0.6h5v1.8M2 2.4v8.5h7.8V2.4" stroke="#3d7fd0" fill="none" stroke-width="0.95"/><path d="M4.7 4.2v4.6M7 4.2v4.6" stroke="#3d7fd0" stroke-width="0.9"/></svg></div>
<div class="abs" style="left:136px;top:267px"><svg class="thumb" width="32" height="32" viewBox="0 0 32 32"><g filter="url(#bl)"><rect width="32" height="32" fill="#fff"/><rect x="9.4" y="0.7" width="12" height="2" fill="#50b040"/><rect x="2" y="4.5" width="28" height="0.8" fill="#c8e8c0"/><rect x="1" y="7.4" width="31" height="21" fill="#c6dec0"/><rect x="3" y="9" width="26" height="1.5" fill="#e4f0e0"/><rect x="13" y="12.7" width="6.8" height="6.3" fill="#eaf2ea"/><rect x="8.4" y="20" width="15.4" height="7" fill="#72c052"/><path d="M24 16h7v11h-7z" fill="#f4f4f4"/><rect x="25" y="21" width="5" height="4" fill="#e87a30"/></g><rect x="0" y="29" width="32" height="3" fill="url(#sg)"/></svg></div>
<div class="cell" style="left:176px;top:267px;width:159px;line-height:18px">SP00000291<br>辣苹果Du Kkeobi离子光催化甲醛清除剂新房新车新家具喷雾剂装修</div>
<div class="cell" style="left:344px;top:276px;line-height:18px">SP00000291</div>
<div class="cell" style="left:440px;top:267px;line-height:18px">辣苹果Du Kkeobi离子光催化甲醛清<br>除剂新房新车新家具喷雾剂装修</div>
<div class="cell" style="left:648px;top:276px;line-height:18px">家居日用</div>
<div class="abs" style="left:14px;top:317px;width:12px;height:12px;border:1px solid #dcdcdc;border-radius:2px;background:#fff"></div>
<div class="cell" style="left:31px;top:314px;width:40px;text-align:center;line-height:18px;font-size:12px">9</div>
<div class="abs" style="left:75px;top:316.6px"><svg width="11" height="12" viewBox="0 0 11 12"><path d="M1.3 10.6l0.2-2.6 5.7-7.2 2.3 1.8-5.7 7.2z" stroke="#3d7fd0" fill="none" stroke-width="0.9" stroke-linejoin="round"/><path d="M6.2 2.1l2.3 1.8" stroke="#3d7fd0" stroke-width="0.8"/><path d="M5.2 10.4h5" stroke="#3d7fd0" stroke-width="1"/></svg></div>
<div class="abs" style="left:94px;top:317px"><svg width="11" height="11" viewBox="0 0 11 11"><path d="M5.5 0.3v10.4M0.3 5.5h10.4" stroke="#3d7fd0" stroke-width="0.95"/></svg></div>
<div class="abs" style="left:113px;top:316.6px"><svg width="12" height="12" viewBox="0 0 12 12"><path d="M0.6 2.4h10.6M3.5 2.4V0.6h5v1.8M2 2.4v8.5h7.8V2.4" stroke="#3d7fd0" fill="none" stroke-width="0.95"/><path d="M4.7 4.2v4.6M7 4.2v4.6" stroke="#3d7fd0" stroke-width="0.9"/></svg></div>
<div class="abs" style="left:136px;top:305px"><svg class="thumb" width="32" height="32" viewBox="0 0 32 32"><g filter="url(#bl)"><rect width="32" height="32" fill="#f2f2f4"/><path d="M0 1.5h32" stroke="#c8c8c8" stroke-width="0.8"/><rect x="0" y="5" width="6" height="24" fill="#f6f6f8"/><rect x="6" y="5" width="5" height="24" fill="#e0dcd8"/><rect x="11" y="5" width="5" height="24" fill="#ece8e2"/><rect x="16" y="5" width="6" height="24" fill="#d8d4d0"/><rect x="22" y="6" width="5" height="23" fill="#9aa6b8"/><rect x="27" y="7" width="5" height="22" fill="#7c9688"/><path d="M7 5l2-3M12 5l2-3M17 5l2-3M22 6l2-3" stroke="#b88858" stroke-width="1"/><ellipse cx="16.5" cy="25" rx="8.5" ry="6.5" fill="#98d4dc"/><rect x="11" y="23" width="11" height="2" fill="#fff"/></g><rect x="0" y="29" width="32" height="3" fill="url(#sg)"/></svg></div>
<div class="cell" style="left:176px;top:305px;width:159px;line-height:18px">SP00000293<br>smart反复使用衣柜除湿袋环保 防潮吸湿包 挂钩式</div>
<div class="cell" style="left:344px;top:314px;line-height:18px">SP00000293</div>
<div class="cell" style="left:440px;top:305px;line-height:18px">smart反复使用衣柜除湿袋环保 防潮<br>吸湿包 挂钩式</div>
<div class="cell" style="left:648px;top:314px;line-height:18px">家居日用</div>
<div class="abs" style="left:14px;top:355px;width:12px;height:12px;border:1px solid #dcdcdc;border-radius:2px;background:#fff"></div>
<div class="cell" style="left:31px;top:352px;width:40px;text-align:center;line-height:18px;font-size:12px">10</div>
<div class="abs" style="left:75px;top:354.6px"><svg width="11" height="12" viewBox="0 0 11 12"><path d="M1.3 10.6l0.2-2.6 5.7-7.2 2.3 1.8-5.7 7.2z" stroke="#3d7fd0" fill="none" stroke-width="0.9" stroke-linejoin="round"/><path d="M6.2 2.1l2.3 1.8" stroke="#3d7fd0" stroke-width="0.8"/><path d="M5.2 10.4h5" stroke="#3d7fd0" stroke-width="1"/></svg></div>
<div class="abs" style="left:94px;top:355px"><svg width="11" height="11" viewBox="0 0 11 11"><path d="M5.5 0.3v10.4M0.3 5.5h10.4" stroke="#3d7fd0" stroke-width="0.95"/></svg></div>
<div class="abs" style="left:113px;top:354.6px"><svg width="12" height="12" viewBox="0 0 12 12"><path d="M0.6 2.4h10.6M3.5 2.4V0.6h5v1.8M2 2.4v8.5h7.8V2.4" stroke="#3d7fd0" fill="none" stroke-width="0.95"/><path d="M4.7 4.2v4.6M7 4.2v4.6" stroke="#3d7fd0" stroke-width="0.9"/></svg></div>
<div class="abs" style="left:136px;top:343px"><svg class="thumb" width="32" height="32" viewBox="0 0 32 32"><g filter="url(#bl)"><rect width="32" height="32" fill="#fff"/><path d="M9 1h9l3 3h-5v5h-4V4H9z" fill="#eeeeee" stroke="#d8d8d8" stroke-width="0.6"/><rect x="13" y="7" width="5" height="3" fill="#f4f4f4"/><path d="M11 11q5-3 9.5 0v14q-4.7 1.5-9.5 0z" fill="#f0589c"/><rect x="12.5" y="16" width="6.5" height="5" fill="#fbe4ee"/></g><rect x="0" y="29" width="32" height="3" fill="url(#sg)"/></svg></div>
<div class="cell" style="left:176px;top:343px;width:159px;line-height:18px">SP00000295<br>辣苹果DuKkeobi除螨剂床上沙发安全无毒深层清除螨虫喷雾</div>
<div class="cell" style="left:344px;top:352px;line-height:18px">SP00000295</div>
<div class="cell" style="left:440px;top:343px;line-height:18px">辣苹果DuKkeobi除螨剂床上沙发安全<br>无毒深层清除螨虫喷雾</div>
<div class="cell" style="left:648px;top:352px;line-height:18px">清洁用具</div>
</div>
<div class="abs" style="left:947px;top:158px;width:159px;height:376px;background:#fff;overflow:hidden">
<div class="hl" style="left:0;top:38px;width:160px"></div>
<div class="cell link" style="left:3px;top:10px;line-height:18px">停用 修改期初 网店库存 上传</div>
<div class="hl" style="left:0;top:76px;width:160px"></div>
<div class="cell link" style="left:3px;top:48px;line-height:18px">停用 修改期初 网店库存 上传</div>
<div class="hl" style="left:0;top:114px;width:160px"></div>
<div class="cell link" style="left:3px;top:86px;line-height:18px">停用 修改期初 网店库存 上传</div>
<div class="hl" style="left:0;top:152px;width:160px"></div>
<div class="cell link" style="left:3px;top:124px;line-height:18px">停用 修改期初 网店库存 上传</div>
<div class="hl" style="left:0;top:190px;width:160px"></div>
<div class="cell link" style="left:3px;top:162px;line-height:18px">停用 修改期初 网店库存 上传</div>
<div class="hl" style="left:0;top:228px;width:160px"></div>
<div class="cell link" style="left:3px;top:200px;line-height:18px">停用 修改期初 网店库存 上传</div>
<div class="hl" style="left:0;top:266px;width:160px"></div>
<div class="cell link" style="left:3px;top:238px;line-height:18px">停用 修改期初 网店库存 上传</div>
<div class="hl" style="left:0;top:304px;width:160px"></div>
<div class="cell link" style="left:3px;top:276px;line-height:18px">停用 修改期初 网店库存 上传</div>
<div class="hl" style="left:0;top:342px;width:160px"></div>
<div class="cell link" style="left:3px;top:314px;line-height:18px">停用 修改期初 网店库存 上传</div>
<div class="hl" style="left:0;top:380px;width:160px"></div>
<div class="cell link" style="left:3px;top:352px;line-height:18px">停用 修改期初 网店库存 上传</div>
</div>
<div class="hd" style="left:947px;width:159px">操作</div>
<div class="abs" style="left:944px;top:141px;color:#fff;width:3px;height:14px;overflow:hidden;line-height:14px;font-size:12px"><span style="position:absolute;left:-9px;top:0">量</span></div>
<div class="abs" style="left:936px;top:138px;width:11px;height:396px;background:linear-gradient(90deg,rgba(0,0,0,0),rgba(0,0,0,0.06))"></div>
<div class="abs" style="left:413px;top:138px;width:9px;height:396px;background:linear-gradient(90deg,rgba(0,0,0,0.06),rgba(0,0,0,0))"></div>
<div class="abs" style="left:1106px;top:158px;width:18px;height:376px;background:#f1f1f1"></div>
<svg class="abs" style="left:1111px;top:165px" width="9" height="5" viewBox="0 0 9 5"><path d="M0.5 4.5l4-4 4 4z" fill="#a3a3a3"/></svg>
<div class="abs" style="left:1109px;top:176px;width:13px;height:112px;background:#c1c1c1"></div>
<svg class="abs" style="left:1111px;top:522px" width="9" height="5" viewBox="0 0 9 5"><path d="M0.5 0.5l4 4 4-4z" fill="#505050"/></svg>
<div class="abs" style="left:77px;top:534px;width:1047px;height:17px;background:#f1f1f1"></div>
<svg class="abs" style="left:82px;top:538px" width="5" height="9" viewBox="0 0 5 9"><path d="M4.5 0.5l-4 4 4 4z" fill="#a3a3a3"/></svg>
<div class="abs" style="left:94px;top:536px;width:407px;height:13px;background:#c1c1c1"></div>
<svg class="abs" style="left:1097px;top:538px" width="5" height="9" viewBox="0 0 5 9"><path d="M0.5 0.5l4 4-4 4z" fill="#505050"/></svg>
<div class="abs" style="left:1107px;top:534px;width:16px;height:17px;background:#dcdcdc"></div>
<div class="abs" style="left:1133px;top:113px;width:177px;height:441px;border:1px solid #dedede"></div>
<div class="hl" style="left:1134px;top:137px;width:175px"></div>
<div class="abs" style="left:1142px;top:117px;line-height:18px;color:#111">快速查询</div>
<svg class="abs" style="left:1142px;top:147px" width="8" height="5" viewBox="0 0 8 5"><path d="M0 0h8l-4 5z" fill="#c0c4cc"/></svg>
<div class="abs" style="left:1156px;top:141px;line-height:18px;color:#555">全部</div>
<div class="tree" style="top:161.5px">家庭小吃</div>
<div class="tree" style="top:182.4px">零食糕点</div>
<div class="tree" style="top:203.2px">清洁用具</div>
<div class="tree" style="top:224.1px">家居日用</div>
<div class="tree" style="top:244.9px">厨房用品</div>
<div class="tree" style="top:265.8px">疫情专区</div>
<div class="tree" style="top:286.7px">个护清洁</div>
<div class="tree" style="top:307.5px">无效商品</div>
<div class="btn" style="left:76px;top:558px;width:66px;height:23px;line-height:24px;text-align:left;padding-left:12px">其它<svg class="abs" style="left:42px;top:9px" width="11" height="6" viewBox="0 0 11 6"><path d="M0.6 0.6l4.9 4.6 4.9-4.6" stroke="#fff" fill="none" stroke-width="1.2"/></svg></div>
<div class="btn" style="left:150px;top:558px;width:73px;height:23px;line-height:24px">批量操作</div>
<div class="btn" style="left:231px;top:558px;width:74px;height:23px;line-height:24px">导入导出</div>
<div class="btn" style="left:313px;top:558px;width:73px;height:23px;line-height:24px">打&nbsp;&nbsp;&nbsp;&nbsp;&nbsp;&nbsp;&nbsp;印</div>
<div class="abs" style="left:892px;top:562px;line-height:16px;color:#555">共 168 条</div>
<div class="pg" style="left:956px"><svg class="abs" style="left:9px;top:6px" width="6" height="10" viewBox="0 0 6 10"><path d="M5 1L1 5l4 4" stroke="#333" fill="none" stroke-width="1.2"/></svg></div>
<div class="pg" style="left:988px;background:#039bff;color:#fff;font-weight:bold">1</div>
<div class="pg" style="left:1020px">2</div>
<div class="pg" style="left:1052px">3</div>
<div class="pg" style="left:1084px">4</div>
<div class="pg" style="left:1116px">5</div>
<div class="pg" style="left:1148px">6</div>
<div class="pg" style="left:1180px"><svg class="abs" style="left:9px;top:6px" width="6" height="10" viewBox="0 0 6 10"><path d="M1 1l4 4-4 4" stroke="#333" fill="none" stroke-width="1.2"/></svg></div>
<div class="abs" style="left:1227px;top:562px;line-height:17px;color:#555">前往</div>
<div class="abs" style="left:1254px;top:560px;width:37px;height:21px;border:1px solid #dcdfe6;border-radius:2px;text-align:center;line-height:21px;color:#333">1</div>
<div class="abs" style="left:1294px;top:562px;line-height:16px;color:#555">页</div>
</body></html>
